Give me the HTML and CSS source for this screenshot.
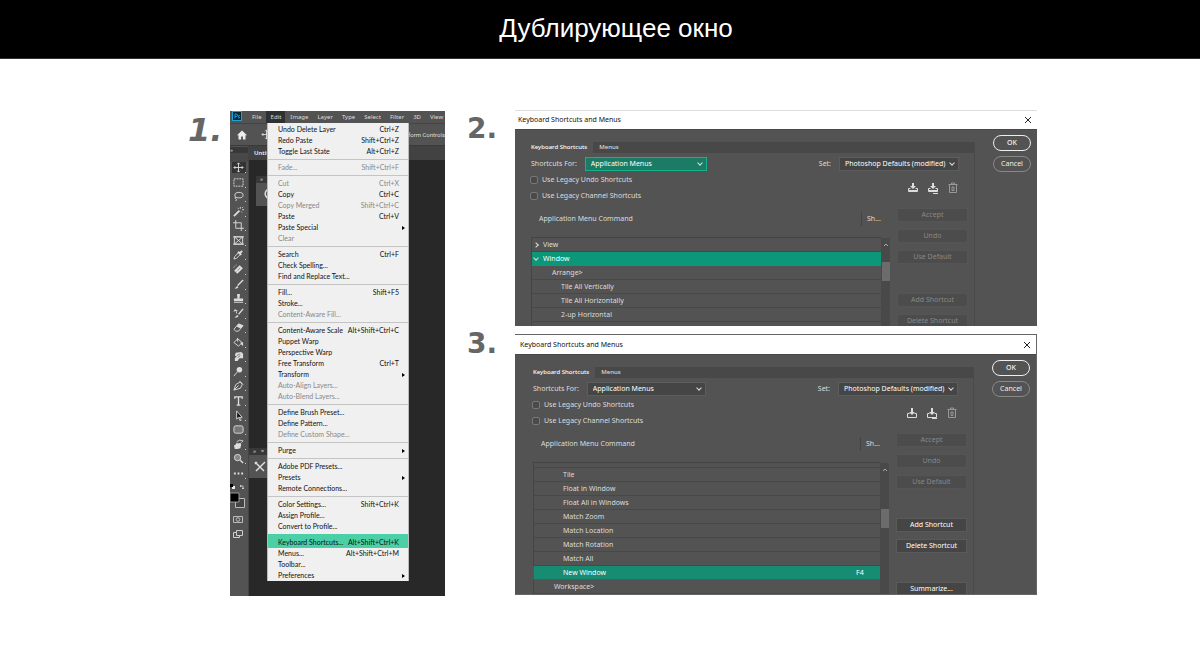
FILE: index.html
```html
<!DOCTYPE html>
<html lang="ru">
<head>
<meta charset="utf-8">
<title>Дублирующее окно</title>
<link rel="stylesheet" href="styles.css">
</head>
<body>
<header class="page-header"><h1>Дублирующее окно</h1></header>
<main class="steps">
  <section class="step step-one">
    <span class="step-number step-number-one">1.</span>
    <div class="editor" lang="en">
      <nav class="menubar">
        <svg class="logo" viewBox="0 0 10 10"><rect x=".5" y=".5" width="9" height="9" fill="#06263a" stroke="#1ba3d6"/><path d="M3 7.500V3h1.200a1.300 1.300 0 0 1 0 2.600H3M6 7q1.800.4 1.500-.7Q6 5.500 6.300 4.800q.5-.6 1.400-.2" fill="none" stroke="#31b4e8" stroke-width=".8"/></svg>
        <button>File</button><button class="open">Edit</button><button>Image</button><button>Layer</button><button>Type</button><button>Select</button><button>Filter</button><button>3D</button><button>View</button>
      </nav>
      <div class="options">
        <svg class="home" viewBox="0 0 10 10"><path d="M5 .5 0 5.200h1.500V9.500h2.600V6.500h1.800v3h2.600V5.200H10z" fill="#eee"/></svg>
        <svg class="options-move" viewBox="0 0 12 12"><path d="M6 1v10M1 6h10M4.500 2.500 6 1l1.500 1.500M4.500 9.500 6 11l1.500-1.500M2.500 4.500 1 6l1.500 1.500M9.500 4.500 11 6 9.500 7.500" fill="none" stroke="#ddd"/></svg>
        <span class="options-text">sform Controls</span>
      </div>
      <div class="workspace">
        <aside class="tools">
          <span class="grip">»</span>
          <div class="tool-list">
            <button class="tool active" aria-label="Move"><svg viewBox="0 0 12 12"><path d="M6 1v10M1 6h10M4.500 2.500 6 1l1.500 1.500M4.500 9.500 6 11l1.500-1.500M2.500 4.500 1 6l1.500 1.500M9.500 4.500 11 6 9.500 7.500"/></svg></button>
            <button class="tool" aria-label="Marquee"><svg viewBox="0 0 12 12"><rect x="1" y="2" width="10" height="8" stroke-dasharray="2 1"/></svg></button>
            <button class="tool" aria-label="Lasso"><svg viewBox="0 0 12 12"><ellipse cx="6.500" cy="4.500" rx="4.500" ry="3"/><path d="M3 6.500Q1 8 3 8.500T3 11"/></svg></button>
            <button class="tool" aria-label="Wand"><svg viewBox="0 0 12 12"><path d="m1 11 6-6" stroke-width="2"/><path d="M8 1v2M10 4h2M5 2l1 1M10 2l1-1M9 6l1 1"/></svg></button>
            <button class="tool" aria-label="Crop"><svg viewBox="0 0 12 12"><path d="M3 0v9h9M0 3h9v9"/></svg></button>
            <button class="tool" aria-label="Frame"><svg viewBox="0 0 12 12"><path d="M1.500 2h9v8h-9zM1.500 2l9 8M10.500 2l-9 8M0 2h12M0 10h12"/></svg></button>
            <button class="tool" aria-label="Eyedropper"><svg viewBox="0 0 12 12"><path d="m1 11 1-3 4-4 2 2-4 4z"/><path d="m7 5 3-3M5.500 3l3.500 3.500" stroke-width="2"/></svg></button>
            <button class="tool" aria-label="Healing brush"><svg viewBox="0 0 12 12"><path d="m3 9 6-6" stroke-width="5"/><path d="m4 8 4-4" stroke="#555" stroke-dasharray="1 1"/><path d="M1 4q0-2 3-3" stroke-dasharray="1 1"/></svg></button>
            <button class="tool" aria-label="Brush"><svg viewBox="0 0 12 12"><path d="m11 1-6 6" stroke-width="1.500"/><path d="M1 11q2 0 2-2l2-1.500L6 9q-1 2-5 2z" class="solid"/></svg></button>
            <button class="tool" aria-label="Stamp"><svg viewBox="0 0 12 12"><path d="M4.500 1h3v2L7 6h4v3H1V6h4l-.5-3zM1 10h10v1H1z" class="solid"/></svg></button>
            <button class="tool" aria-label="History brush"><svg viewBox="0 0 12 12"><path d="m11 1-5 6" stroke-width="1.500"/><path d="M1 4l1-2 3 1M2 2q2 1 2 4"/><path d="M1 11q2 0 2-2l2-1.500L6 9q-1 2-5 2z" class="solid"/></svg></button>
            <button class="tool" aria-label="Eraser"><svg viewBox="0 0 12 12"><path d="m1 8 5-6 5 2-5 6H3z"/><path d="m4 5 4 2 3-3-5-2z" class="solid"/></svg></button>
            <button class="tool" aria-label="Bucket"><svg viewBox="0 0 12 12"><path d="m5 2 5 4-4 4-5-4zM5 5V1"/><path d="m8 6 3 0v4L9 8z" class="solid"/></svg></button>
            <button class="tool" aria-label="Smudge"><svg viewBox="0 0 12 12"><path d="M2 11V8l2-2-2-1 1-3 6-1 2 2v5L7 8l-2 3z" class="solid"/><path d="m4 5 4-2M5 7l3-2" stroke="#555" stroke-width=".7"/></svg></button>
            <button class="tool" aria-label="Dodge"><svg viewBox="0 0 12 12"><circle cx="7" cy="4" r="3" class="solid"/><path d="m1 11 4-5"/></svg></button>
            <button class="tool" aria-label="Pen"><svg viewBox="0 0 12 12"><path d="m1 11 2-6 5-3 2 3-2 4zM1 11l5-5M7 1l4 4"/></svg></button>
            <button class="tool" aria-label="Type"><svg viewBox="0 0 12 12"><path d="M2 4V2h8v2M6 2v9M4 11h4" stroke-width="1.500"/></svg></button>
            <button class="tool" aria-label="Path selection"><svg viewBox="0 0 12 12"><path d="m4 1 0 9 2-2 2 4 1-1-2-3h3z" fill="#111"/></svg></button>
            <button class="tool" aria-label="Rounded rectangle"><svg viewBox="0 0 12 12"><rect x="1" y="2" width="10" height="8" rx="2" fill="#777"/></svg></button>
            <button class="tool" aria-label="Rotate view"><svg viewBox="0 0 12 12"><path d="M2 11 1 7l2-1 1-2 2 1 2-1 1 2-1 4-3 1z" class="solid"/><path d="M4 3q3-3 7-1L9 4M5 7l1 2M7 6v2" stroke-width=".9"/></svg></button>
            <button class="tool" aria-label="Zoom"><svg viewBox="0 0 12 12"><circle cx="5" cy="5" r="3.500" fill="#888"/><path d="m8 8 3 3" stroke-width="1.500"/></svg></button>
            <button class="tool" aria-label="More"><svg viewBox="0 0 12 12"><path d="M1 6h2M5 6h2M9 6h2" stroke-width="2"/></svg></button>
          </div>
          <svg class="swatches" viewBox="0 0 18 60"><path d="M0 2h3v3H0z"/><path d="M3 4h2v3H2V5h1z" fill="#eee"/><path d="M10 4h3v3M10 4l1-1M10 4l1 1M13 7l1-1M13 7l-1-1" fill="none" stroke="#ddd" stroke-width=".8"/><path d="M5.500 16.500h9v9h-9z" fill="#444" stroke="#bbb"/><path d="M0 11h9v9H0z" stroke="#999"/><path d="M3.500 34.500h9v6h-9z" fill="none" stroke="#bbb"/><circle cx="8" cy="37.500" r="1.800" fill="none" stroke="#bbb"/><path d="M6.500 48.500h6v5h-6zM6 50.500H3.500v5h6V54" fill="none" stroke="#ccc"/></svg>
        </aside>
        <div class="document">
          <div class="doc-tab">Untitled</div>
          <div class="float float-top"><span class="float-head">»</span><svg viewBox="0 0 12 14"><path d="M11 3Q6 0 4.500 4T8 11l3-1" fill="none" stroke="#ddd" stroke-width="1.500"/></svg></div>
          <div class="float float-bottom"><span class="float-head">»&nbsp;&nbsp;&nbsp;×</span><svg viewBox="0 0 12 12"><path d="m1 1 9 9M11 1 2 10M1 3l2-2" fill="none" stroke="#ddd" stroke-width="1.500"/></svg></div>
        </div>
      </div>
      <div class="menu">
        <ul>
          <li><button>Undo Delete Layer<kbd>Ctrl+Z</kbd></button></li>
          <li><button>Redo Paste<kbd>Shift+Ctrl+Z</kbd></button></li>
          <li><button>Toggle Last State<kbd>Alt+Ctrl+Z</kbd></button></li>
        </ul>
        <ul>
          <li><button disabled>Fade...<kbd>Shift+Ctrl+F</kbd></button></li>
        </ul>
        <ul>
          <li><button disabled>Cut<kbd>Ctrl+X</kbd></button></li>
          <li><button>Copy<kbd>Ctrl+C</kbd></button></li>
          <li><button disabled>Copy Merged<kbd>Shift+Ctrl+C</kbd></button></li>
          <li><button>Paste<kbd>Ctrl+V</kbd></button></li>
          <li><button class="sub">Paste Special</button></li>
          <li><button disabled>Clear</button></li>
        </ul>
        <ul>
          <li><button>Search<kbd>Ctrl+F</kbd></button></li>
          <li><button>Check Spelling...</button></li>
          <li><button>Find and Replace Text...</button></li>
        </ul>
        <ul>
          <li><button>Fill...<kbd>Shift+F5</kbd></button></li>
          <li><button>Stroke...</button></li>
          <li><button disabled>Content-Aware Fill...</button></li>
        </ul>
        <ul>
          <li><button>Content-Aware Scale<kbd>Alt+Shift+Ctrl+C</kbd></button></li>
          <li><button>Puppet Warp</button></li>
          <li><button>Perspective Warp</button></li>
          <li><button>Free Transform<kbd>Ctrl+T</kbd></button></li>
          <li><button class="sub">Transform</button></li>
          <li><button disabled>Auto-Align Layers...</button></li>
          <li><button disabled>Auto-Blend Layers...</button></li>
        </ul>
        <ul>
          <li><button>Define Brush Preset...</button></li>
          <li><button>Define Pattern...</button></li>
          <li><button disabled>Define Custom Shape...</button></li>
        </ul>
        <ul>
          <li><button class="sub">Purge</button></li>
        </ul>
        <ul>
          <li><button>Adobe PDF Presets...</button></li>
          <li><button class="sub">Presets</button></li>
          <li><button>Remote Connections...</button></li>
        </ul>
        <ul>
          <li><button>Color Settings...<kbd>Shift+Ctrl+K</kbd></button></li>
          <li><button>Assign Profile...</button></li>
          <li><button>Convert to Profile...</button></li>
        </ul>
        <ul>
          <li><button class="picked">Keyboard Shortcuts...<kbd>Alt+Shift+Ctrl+K</kbd></button></li>
          <li><button>Menus...<kbd>Alt+Shift+Ctrl+M</kbd></button></li>
          <li><button>Toolbar...</button></li>
          <li><button class="sub">Preferences</button></li>
        </ul>
      </div>
    </div>
  </section>

  <div class="step-column">
    <section class="step">
      <span class="step-number">2.</span>
      <div class="dialog dialog-first" lang="en">
        <header class="dialog-title"><h2>Keyboard Shortcuts and Menus</h2><button class="close" aria-label="Close"><svg viewBox="0 0 8 8"><path d="m1 1 6 6M7 1 1 7"/></svg></button></header>
        <div class="dialog-body">
          <div class="panel">
            <div class="tabs"><button class="current">Keyboard Shortcuts</button><button>Menus</button></div>
            <div class="form-row">
              <label for="for-a">Shortcuts For:</label>
              <span class="pick pick-for focused"><select id="for-a"><option>Application Menus</option></select></span>
              <label class="push" for="set-a">Set:</label>
              <span class="pick pick-set"><select id="set-a"><option>Photoshop Defaults (modified)</option></select></span>
            </div>
            <div class="form-row checks-row">
              <div class="checks">
                <label><input type="checkbox">Use Legacy Undo Shortcuts</label>
                <label><input type="checkbox">Use Legacy Channel Shortcuts</label>
              </div>
              <div class="set-actions">
                <button aria-label="Save set"><svg viewBox="0 0 12 12"><path d="M3.500 6.500h-2v3h9v-3h-2M2 8.500h8"/><path d="M6 7 3 4h2V1h2v3h2z" class="solid"/></svg></button>
                <button aria-label="Save set as"><svg viewBox="0 0 12 12"><path d="M3.500 6.500h-2v3h9v-3h-2M2 8.500h8M6 11.500h5" /><path d="M6 7 3 4h2V1h2v3h2z" class="solid"/></svg></button>
                <button class="faint" aria-label="Delete set"><svg viewBox="0 0 12 12"><path d="M1.500 2.500h9M2.500 2.500v8h7v-8M4.500 2V1h3v1M5 5v3.500h2V5z"/></svg></button>
              </div>
            </div>
            <div class="content">
              <div class="list">
                <table>
                  <thead><tr><th>Application Menu Command</th><th class="keys"><span>Sh...</span></th></tr></thead>
                  <tbody>
                    <tr><td class="top closed">View</td><td></td></tr>
                    <tr class="chosen"><td class="top opened">Window</td><td></td></tr>
                    <tr><td class="mid">Arrange&gt;</td><td></td></tr>
                    <tr><td class="deep">Tile All Vertically</td><td></td></tr>
                    <tr><td class="deep">Tile All Horizontally</td><td></td></tr>
                    <tr><td class="deep">2-up Horizontal</td><td></td></tr>
                    <tr><td></td><td></td></tr>
                  </tbody>
                </table>
                <div class="scroll"><svg viewBox="0 0 6 4"><path d="m1 3 2-2 2 2"/></svg><span class="thumb"></span></div>
              </div>
              <div class="commands">
                <button disabled>Accept</button><button disabled>Undo</button><button disabled>Use Default</button>
                <button class="apart" disabled>Add Shortcut</button><button disabled>Delete Shortcut</button>
              </div>
            </div>
          </div>
          <div class="confirm"><button class="ok">OK</button><button>Cancel</button></div>
        </div>
      </div>
    </section>

    <section class="step">
      <span class="step-number step-number-three">3.</span>
      <div class="dialog dialog-second" lang="en">
        <header class="dialog-title"><h2>Keyboard Shortcuts and Menus</h2><button class="close" aria-label="Close"><svg viewBox="0 0 8 8"><path d="m1 1 6 6M7 1 1 7"/></svg></button></header>
        <div class="dialog-body">
          <div class="panel">
            <div class="tabs"><button class="current">Keyboard Shortcuts</button><button>Menus</button></div>
            <div class="form-row">
              <label for="for-b">Shortcuts For:</label>
              <span class="pick pick-for"><select id="for-b"><option>Application Menus</option></select></span>
              <label class="push" for="set-b">Set:</label>
              <span class="pick pick-set"><select id="set-b"><option>Photoshop Defaults (modified)</option></select></span>
            </div>
            <div class="form-row checks-row">
              <div class="checks">
                <label><input type="checkbox">Use Legacy Undo Shortcuts</label>
                <label><input type="checkbox">Use Legacy Channel Shortcuts</label>
              </div>
              <div class="set-actions">
                <button aria-label="Save set"><svg viewBox="0 0 12 12"><path d="M3.500 6.500h-2v4h9v-4h-2"/><path d="M6 8 3 5h2V1h2v4h2z" class="solid"/></svg></button>
                <button aria-label="Save set as"><svg viewBox="0 0 12 12"><path d="M3.500 6.500h-2v4h9v-4h-2M6 11.500h5"/><path d="M6 8 3 5h2V1h2v4h2z" class="solid"/></svg></button>
                <button class="faint" aria-label="Delete set"><svg viewBox="0 0 12 12"><path d="M1.500 2.500h9M2.500 2.500v8h7v-8M4.500 2V1h3v1M5 5v3.500h2V5z"/></svg></button>
              </div>
            </div>
            <div class="content">
              <div class="list">
                <table>
                  <thead><tr><th>Application Menu Command</th><th class="keys"><span>Sh...</span></th></tr></thead>
                  <tbody>
                    <tr class="sliver"><td></td><td></td></tr>
                    <tr><td class="deep">Tile</td><td></td></tr>
                    <tr><td class="deep">Float in Window</td><td></td></tr>
                    <tr><td class="deep">Float All in Windows</td><td></td></tr>
                    <tr><td class="deep">Match Zoom</td><td></td></tr>
                    <tr><td class="deep">Match Location</td><td></td></tr>
                    <tr><td class="deep">Match Rotation</td><td></td></tr>
                    <tr><td class="deep">Match All</td><td></td></tr>
                    <tr class="chosen"><td class="deep">New Window</td><td>F4</td></tr>
                    <tr><td class="mid">Workspace&gt;</td><td></td></tr>
                  </tbody>
                </table>
                <div class="scroll"><svg viewBox="0 0 6 4"><path d="m1 3 2-2 2 2"/></svg><span class="thumb"></span></div>
              </div>
              <div class="commands">
                <button disabled>Accept</button><button disabled>Undo</button><button disabled>Use Default</button>
                <button class="apart">Add Shortcut</button><button>Delete Shortcut</button>
                <button class="apart">Summarize...</button>
              </div>
            </div>
          </div>
          <div class="confirm"><button class="ok">OK</button><button>Cancel</button></div>
        </div>
      </div>
    </section>
  </div>
</main>
</body>
</html>
```
FILE: styles.css
```css
*, *::before, *::after { box-sizing: border-box; }
body { margin: 0; background: #fff; font-family: "Noto Sans", sans-serif; }
button, select, input { font: inherit; color: inherit; margin: 0; padding: 0; border: 0; background: none; }
h1, h2, ul { margin: 0; padding: 0; }
ul { list-style: none; }
svg { display: block; }

.page-header { background: #000; color: #fff; text-align: center; padding: 13px 0 14px 32px; border-bottom: 1px solid #333; }
.page-header h1 { font: 400 26px/31px "Liberation Sans", Arial, sans-serif; }

.steps { display: grid; grid-template-columns: 257px minmax(0, 1fr); gap: 22px; padding: 51px 163px 0 188px; align-items: start; }
.step { display: grid; grid-template-columns: 48px minmax(0, 1fr); align-items: start; }
.step-one { grid-template-columns: 42px minmax(0, 1fr); padding-top: 1px; }
.step-column { display: grid; gap: 8px; }
.step-number { font: 700 28px/38px "DejaVu Sans", sans-serif; color: #666; }
.step-number-one { font-size: 32px; font-style: oblique; }
.step-number-three { line-height: 20px; }

/* Editor window */
.editor { position: relative; background: #535353; color: #ddd; font-size: 6px; line-height: 12px; overflow: hidden; }
.menubar { display: flex; height: 12px; padding-left: 2px; }
.menubar button { padding: 0 4px 0 5px; line-height: 12px; }
.menubar .open { background: #303030; }
.logo { width: 10px; height: 10px; margin-right: 5px; flex: none; }
.options { display: flex; align-items: center; height: 23px; border-top: 1px solid #444; border-bottom: 1px solid #3a3a3a; padding-left: 7px; }
.home { width: 10px; height: 10px; }
.options-move { width: 11px; height: 11px; margin-left: 14px; }
.options-text { margin-left: auto; white-space: nowrap; font-family: Roboto, sans-serif; }
.workspace { display: grid; grid-template-columns: 19px minmax(0, 1fr); }
.tools { background: #535353; border-right: 1px solid #444; padding-top: 1px; }
.grip { display: block; height: 15px; line-height: 6px; background: linear-gradient(#383838 6px, #484848 6px); }
.tool-list { display: flex; flex-direction: column; justify-content: space-between; height: 317px; padding-left: 2px; }
.tool { position: relative; width: 14px; height: 11px; padding-left: 1px; }
.tool::after { content: ""; position: absolute; right: 0; bottom: 0; width: 1px; height: 1px; background: #ccc; }
.tool.active { background: #333; }
.tool svg { width: 11px; height: 11px; fill: none; stroke: #ddd; }
.tool .solid, .set-actions .solid { fill: #ddd; stroke: none; }
.swatches { width: 18px; height: 60px; margin: 3px 0 54px; }
.document { background: #282828; position: relative; }
.doc-tab { background: #424242; color: #eee; padding-left: 5px; line-height: 14px; font-weight: 600; }
.float { position: absolute; width: 20px; height: 30px; background: #535353; }
.float-top { left: 7px; top: 30px; }
.float-bottom { left: 0; top: 302px; }
.float svg { width: 12px; height: 14px; margin: 5px 0 0 5px; }
.float-head { display: block; white-space: nowrap; height: 7px; line-height: 6px; padding-left: 4px; background: #383838; }

.menu { position: absolute; left: 37px; top: 12px; width: 142px; background: #f0f0f0; color: #111; border: 1px solid #bbb; border-width: 0 1px; padding-top: 1px; font-family: Lato, sans-serif; font-size: 7px; }
.menu ul + ul { border-top: 1px solid #c4c4c4; margin-top: 2px; padding-top: 2px; }
.menu ul:last-child { border-color: #4acfa6; background: linear-gradient(#4acfa6 13px, transparent 13px); }
.menu button { display: flex; align-items: center; width: 100%; height: 11px; padding: 0 9px 0 10px; line-height: 11px; white-space: nowrap; }
.menu button:disabled { color: #888; }
.menu kbd { margin-left: auto; font: inherit; }
.menu .sub::after { content: ""; margin: 0 -6px 0 auto; border: 2px solid transparent; border-left: 3px solid #000; border-right: 0; }

/* Shortcut dialogs */
.dialog { overflow: hidden; background: #535353; color: #ddd; font-size: 7px; line-height: 14px; }
.dialog-first { height: 216px; border-top: 1px solid #ddd; }
.dialog-second { height: 261px; border: 1px solid #666; border-left: 0; }
.dialog-title { display: flex; align-items: center; justify-content: space-between; height: 18px; background: #fff; color: #111; padding: 0 5px 0 3px; }
.dialog-title h2 { font-size: 7px; font-weight: 400; }
.close svg { width: 8px; height: 8px; fill: none; stroke: #222; stroke-width: 1; }
.dialog-body { display: grid; grid-template-columns: minmax(0, 1fr) 38px; column-gap: 18px; padding: 12px 6px 0 10px; border-top: 1px solid #484848; }
.dialog-second .dialog-body { padding-left: 12px; }
.dialog-second .dialog-title { padding-left: 5px; height: 19px; }
.panel { border-right: 1px solid #4a4a4a; }
.tabs { display: flex; height: 11px; background: #484848; font-size: 6px; line-height: 11px; font-weight: 500; }
.tabs button { padding: 0 6px; }
.tabs .current { background: #535353; color: #fff; }
.form-row { display: flex; align-items: center; gap: 8px; padding: 0 15px 0 6px; margin-top: 4px; height: 14px; }
.push { margin-left: auto; }
.pick { position: relative; display: flex; height: 14px; background: #454545; border: 1px solid #5d5d5d; }
.pick::after { content: ""; position: absolute; right: 4px; top: 3px; width: 4px; height: 4px; border: solid #ddd; border-width: 0 1px 1px 0; transform: rotate(45deg); pointer-events: none; }
.pick select { appearance: none; width: 100%; padding: 0 8px 0 5px; color: #fff; line-height: 12px; }
.pick-for { width: 122px; }
.dialog-second .pick-for { width: 119px; }
.pick-set { width: 120px; }
.pick.focused { background: #1c7b65; border-color: #12b58b; }
.form-row.checks-row { height: 32px; margin-top: 1px; padding-left: 5px; justify-content: space-between; }
.checks label { display: flex; align-items: center; gap: 4px; height: 16px; }
.checks input { appearance: none; width: 8px; height: 8px; border: 1px solid #777; border-radius: 2px; background: #4a4a4a; }
.set-actions { display: flex; gap: 8px; }
.set-actions svg { width: 12px; height: 12px; fill: none; stroke: #ddd; }
.set-actions .faint { opacity: .5; }
.content { display: grid; grid-template-columns: minmax(0, 1fr) 71px; gap: 7px; padding: 4px 6px 0; align-items: start; }
.list { display: flex; }
.list table { flex: 1; table-layout: fixed; border-collapse: separate; border-spacing: 0; }
.list th { height: 30px; padding: 0 0 0 8px; text-align: left; vertical-align: top; font-weight: 400; line-height: 22px; border-bottom: 1px solid #434343; }
.list .keys { width: 24px; padding: 4px 0 0; line-height: 14px; }
.keys span { display: block; margin-left: 4px; padding-left: 5px; border-left: 1px solid #444; }
.list td { height: 14px; padding: 0; line-height: 13px; border-bottom: 1px solid #484848; white-space: nowrap; }
.list td:first-child { border-left: 1px solid #454545; }
.list .sliver td { height: 5px; line-height: 4px; }
.list .chosen td { background: #0b9778; color: #fff; border-bottom-color: #0b9778; }
.dialog-second .chosen td { background: #178c72; border-color: #14745e; }
.list .top { position: relative; padding-left: 11px; }
.list .mid { padding-left: 20px; }
.list .deep { padding-left: 29px; }
.top::before { content: ""; position: absolute; left: 2px; top: 5px; width: 4px; height: 4px; border: solid #ddd; border-width: 1px 1px 0 0; transform: rotate(45deg); }
.list .opened::before { top: 4px; transform: rotate(135deg); }
.scroll { width: 9px; margin-top: 30px; background: #494949; }
.scroll svg { width: 6px; height: 4px; margin: 5px 0 0 2px; fill: none; stroke: #aaa; }
.thumb { display: block; width: 8px; height: 19px; margin: 15px 0 0 1px; background: #6c6c6c; }
.dialog-second .thumb { margin-top: 37px; }
.commands { display: grid; gap: 7px; }
.commands button { height: 14px; background: #454545; border: 1px solid #5a5a5a; color: #fff; line-height: 12px; }
.commands button:disabled { background: #4c4c4c; color: #888; border-color: #555; }
.commands .apart { margin-top: 22px; }
.confirm { display: grid; gap: 5px; align-content: start; margin-top: -7px; }
.confirm button { height: 16px; border: 1px solid #888; border-radius: 8px; line-height: 14px; color: #eee; }
.confirm .ok { border-color: #eee; font-weight: 500; }
```
